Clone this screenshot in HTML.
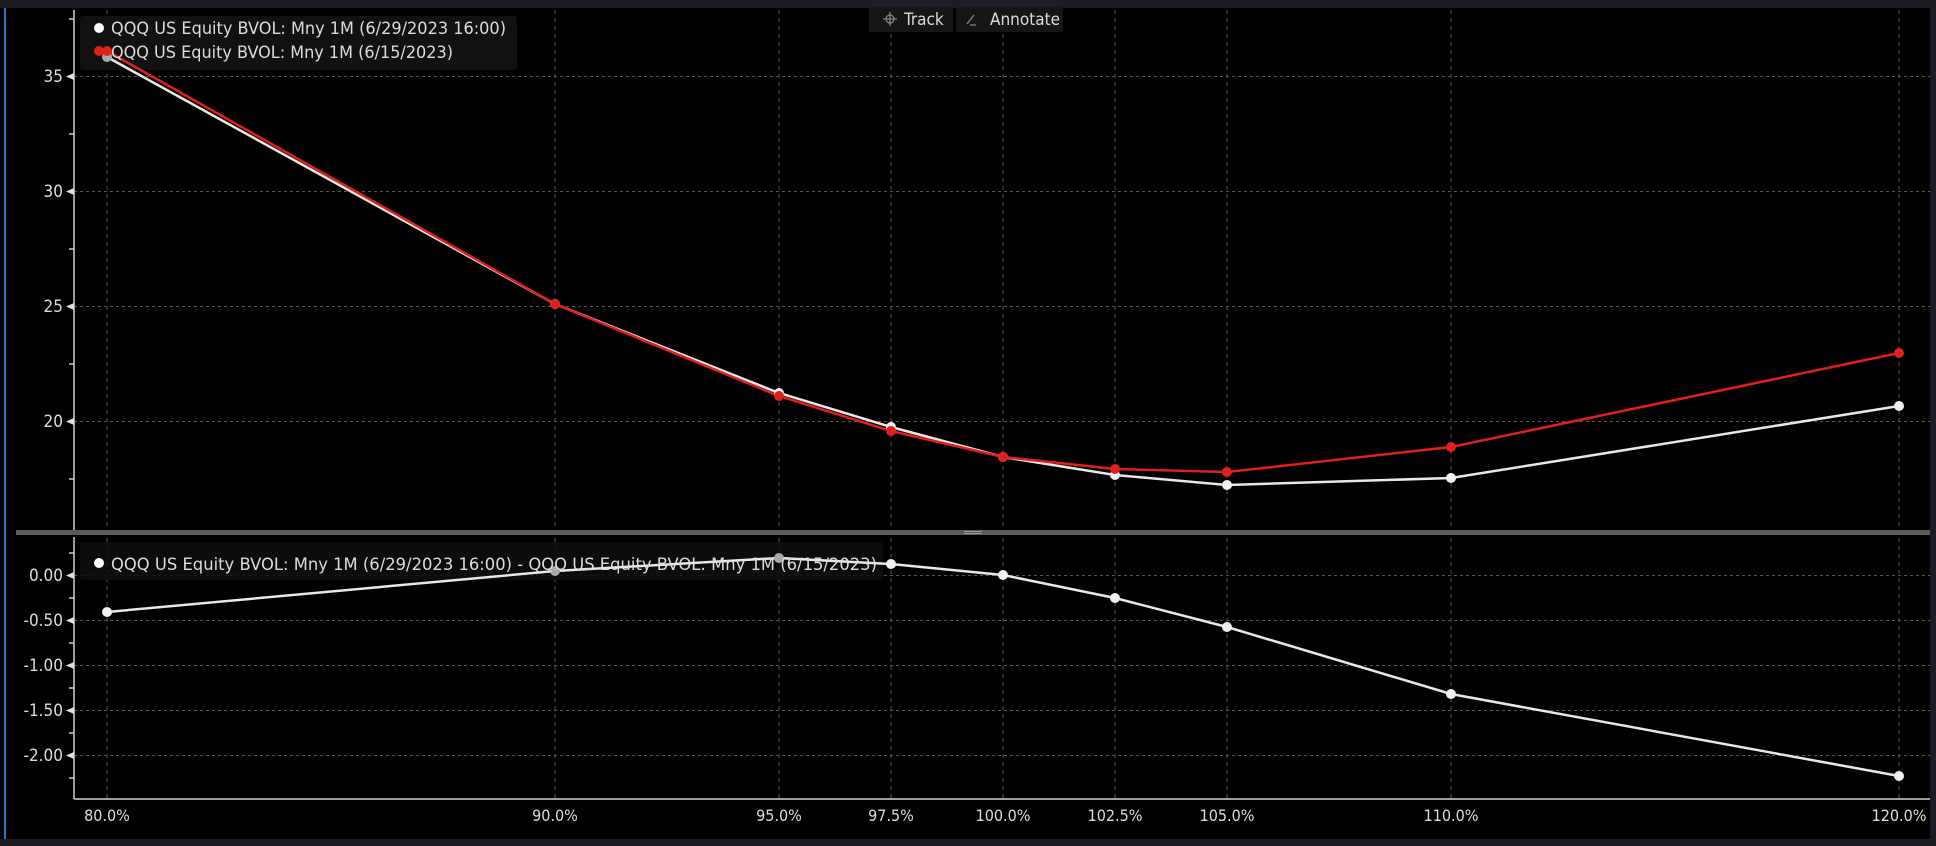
<!DOCTYPE html>
<html><head><meta charset="utf-8"><style>
html,body{margin:0;padding:0;background:#000;}
svg{display:block;}
text{font-family:"DejaVu Sans Condensed","Liberation Sans Narrow","Liberation Sans",sans-serif;fill:#dcdcdc;}
</style></head><body>
<svg width="1936" height="846" viewBox="0 0 1936 846" xmlns="http://www.w3.org/2000/svg">
<rect width="1936" height="846" fill="#000"/>
<rect x="0" y="0" width="1936" height="8" fill="#1b1d23"/>
<rect x="0" y="839" width="1936" height="7" fill="#1b1d23"/>
<rect x="1930" y="0" width="6" height="846" fill="#1b1d23"/>
<rect x="4" y="8" width="2" height="831" fill="#2a78c0"/>
<!-- vertical grid -->
<g stroke="#555" stroke-width="1" stroke-dasharray="4,4">
<line x1="107" y1="10" x2="107" y2="799"/><line x1="555" y1="10" x2="555" y2="799"/><line x1="779" y1="10" x2="779" y2="799"/><line x1="891" y1="10" x2="891" y2="799"/><line x1="1003" y1="10" x2="1003" y2="799"/><line x1="1115" y1="10" x2="1115" y2="799"/><line x1="1227" y1="10" x2="1227" y2="799"/><line x1="1451" y1="10" x2="1451" y2="799"/><line x1="1899" y1="10" x2="1899" y2="799"/>
</g>
<g stroke="#555" stroke-width="1" stroke-dasharray="3,3">
<line x1="74" y1="76.5" x2="1930" y2="76.5"/><line x1="74" y1="191.5" x2="1930" y2="191.5"/><line x1="74" y1="306.5" x2="1930" y2="306.5"/><line x1="74" y1="421.5" x2="1930" y2="421.5"/>
<line x1="74" y1="575.5" x2="1930" y2="575.5"/><line x1="74" y1="620.5" x2="1930" y2="620.5"/><line x1="74" y1="665.5" x2="1930" y2="665.5"/><line x1="74" y1="710.5" x2="1930" y2="710.5"/><line x1="74" y1="755.5" x2="1930" y2="755.5"/>
</g>
<!-- axes -->
<g stroke="#cfcfcf" stroke-width="1.5">
<line x1="74" y1="10" x2="74" y2="530"/><line x1="74" y1="537" x2="74" y2="799"/>
<line x1="74" y1="799" x2="1930" y2="799"/>
<line x1="69" y1="19" x2="74" y2="19"/><line x1="69" y1="134" x2="74" y2="134"/><line x1="69" y1="249" x2="74" y2="249"/><line x1="69" y1="364" x2="74" y2="364"/><line x1="69" y1="479" x2="74" y2="479"/>
<line x1="69" y1="553" x2="74" y2="553"/><line x1="69" y1="598" x2="74" y2="598"/><line x1="69" y1="643" x2="74" y2="643"/><line x1="69" y1="688" x2="74" y2="688"/><line x1="69" y1="733" x2="74" y2="733"/><line x1="69" y1="778" x2="74" y2="778"/>
</g>
<g fill="#e0e0e0">
<path d="M66 76.5 L74 73 L74 80Z"/><path d="M66 191.5 L74 188 L74 195Z"/><path d="M66 306.5 L74 303 L74 310Z"/><path d="M66 421.5 L74 418 L74 425Z"/>
<path d="M66 575.5 L74 572 L74 579Z"/><path d="M66 620.5 L74 617 L74 624Z"/><path d="M66 665.5 L74 662 L74 669Z"/><path d="M66 710.5 L74 707 L74 714Z"/><path d="M66 755.5 L74 752 L74 759Z"/>
</g>
<g font-size="17" text-anchor="end">
<text x="63" y="82">35</text><text x="63" y="197">30</text><text x="63" y="312">25</text><text x="63" y="427">20</text>
<text x="63" y="581">0.00</text><text x="63" y="626">-0.50</text><text x="63" y="671">-1.00</text><text x="63" y="716">-1.50</text><text x="63" y="761">-2.00</text>
</g>
<g font-size="16" text-anchor="middle">
<text x="107" y="821">80.0%</text><text x="555" y="821">90.0%</text><text x="779" y="821">95.0%</text><text x="891" y="821">97.5%</text><text x="1003" y="821">100.0%</text><text x="1115" y="821">102.5%</text><text x="1227" y="821">105.0%</text><text x="1451" y="821">110.0%</text><text x="1899" y="821">120.0%</text>
</g>
<!-- separator -->
<rect x="16" y="530" width="1914" height="5" fill="#5a5a5a"/>
<rect x="964" y="531" width="18" height="1" fill="#999"/><rect x="964" y="533" width="18" height="1" fill="#999"/>
<!-- legends -->
<rect x="80" y="16" width="437" height="54" rx="3" fill="#111"/>
<rect x="80" y="542" width="803" height="38" rx="3" fill="#0e0e0e" opacity="0.85"/>
<!-- top series -->
<polyline fill="none" stroke="#e8e8e8" stroke-width="2.5" points="107,57 555,304 779,393 891,427 1003,457 1115,475 1227,485 1451,478 1899,406"/>
<polyline fill="none" stroke="#e0201a" stroke-width="2.5" points="107,51 555,304 779,396 891,431 1003,457 1115,469 1227,472 1451,447 1899,353"/>
<g fill="#f0f0f0"><circle cx="107" cy="57" r="5" fill="#aaa"/><circle cx="555" cy="304" r="5"/><circle cx="779" cy="393" r="5"/><circle cx="891" cy="427" r="5"/><circle cx="1003" cy="457" r="5"/><circle cx="1115" cy="475" r="5"/><circle cx="1227" cy="485" r="5"/><circle cx="1451" cy="478" r="5"/><circle cx="1899" cy="406" r="5"/></g>
<g fill="#e0201a"><circle cx="107" cy="51" r="5"/><circle cx="555" cy="304" r="5"/><circle cx="779" cy="396" r="5"/><circle cx="891" cy="431" r="5"/><circle cx="1003" cy="457" r="5"/><circle cx="1115" cy="469" r="5"/><circle cx="1227" cy="472" r="5"/><circle cx="1451" cy="447" r="5"/><circle cx="1899" cy="353" r="5"/></g>
<!-- bottom series -->
<polyline fill="none" stroke="#e8e8e8" stroke-width="2.5" points="107,612 555,571 779,558 891,564 1003,575 1115,598 1227,627 1451,694 1899,776"/>
<g fill="#f0f0f0"><circle cx="107" cy="612" r="5"/><circle cx="555" cy="571" r="5" fill="#aaa"/><circle cx="779" cy="558" r="5" fill="#aaa"/><circle cx="891" cy="564" r="5"/><circle cx="1003" cy="575" r="5"/><circle cx="1115" cy="598" r="5"/><circle cx="1227" cy="627" r="5"/><circle cx="1451" cy="694" r="5"/><circle cx="1899" cy="776" r="5"/></g>
<g font-size="17">
<circle cx="99" cy="28" r="5" fill="#fff"/>
<text x="111" y="34" textLength="395" lengthAdjust="spacingAndGlyphs">QQQ US Equity BVOL: Mny 1M (6/29/2023 16:00)</text>
<circle cx="99" cy="51" r="5" fill="#e0201a"/>
<text x="111" y="58" textLength="342" lengthAdjust="spacingAndGlyphs">QQQ US Equity BVOL: Mny 1M (6/15/2023)</text>
<circle cx="99" cy="563" r="5" fill="#fff"/>
<text x="111" y="570" textLength="766" lengthAdjust="spacingAndGlyphs">QQQ US Equity BVOL: Mny 1M (6/29/2023 16:00) - QQQ US Equity BVOL: Mny 1M (6/15/2023)</text>
</g>
<!-- buttons -->
<rect x="869" y="7" width="84" height="25" fill="#161616"/>
<rect x="956" y="7" width="107" height="25" fill="#161616"/>
<g stroke="#888" stroke-width="1.2" fill="none"><circle cx="890" cy="19" r="4"/><line x1="890" y1="12" x2="890" y2="26"/><line x1="883" y1="19" x2="897" y2="19"/><line x1="967" y1="24" x2="974" y2="15"/><line x1="970" y1="25" x2="976" y2="25"/></g>
<text x="904" y="25" font-size="17" fill="#ccc">Track</text>
<text x="990" y="25" font-size="17" fill="#ccc">Annotate</text>
</svg>
</body></html>
